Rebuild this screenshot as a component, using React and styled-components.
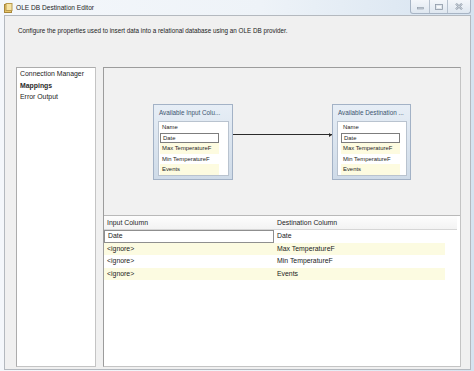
import React from "react";
import styled, { createGlobalStyle } from "styled-components";

const GlobalStyle = createGlobalStyle`
  html, body { margin: 0; padding: 0; }
  body {
    background: #e4ecf5;
    font-family: "Liberation Sans", Arial, sans-serif;
    color: #1b1b1b;
  }
`;

const inputRows = ["Date", "Max TemperatureF", "Min TemperatureF", "Events"];
const mappings = [
  { input: "Date", dest: "Date" },
  { input: "<ignore>", dest: "Max TemperatureF" },
  { input: "<ignore>", dest: "Min TemperatureF" },
  { input: "<ignore>", dest: "Events" },
];

function App() {
  return (
    <Window>
      <GlobalStyle />
      <TitleBar>
        <TitleIcon width="9" height="10" viewBox="0 0 9 10">
          <rect x="0.5" y="1.5" width="7" height="8" fill="#e8c66a" stroke="#a8873a" />
          <rect x="2" y="0.5" width="6" height="7" fill="#f6e3a4" stroke="#b99a4c" />
        </TitleIcon>
        <TitleText>OLE DB Destination Editor</TitleText>
        <CaptionButtons>
          <CaptionButton $w={18}>
            <svg width="7" height="6" viewBox="0 0 7 6">
              <rect x="0.5" y="3.5" width="6" height="1.5" fill="#c8d0da" stroke="#8d98a6" strokeWidth="0.6" />
            </svg>
          </CaptionButton>
          <CaptionButton $w={17}>
            <svg width="8" height="6" viewBox="0 0 8 6">
              <rect x="0.5" y="0.5" width="7" height="5" fill="#dfe5ec" stroke="#8d98a6" strokeWidth="0.8" />
              <rect x="2" y="2" width="4" height="2" fill="#f7f9fb" />
            </svg>
          </CaptionButton>
          <CaptionButton $w={22} $last>
            <svg width="8" height="7" viewBox="0 0 8 7">
              <path d="M1 0.8 L7 6.2 M7 0.8 L1 6.2" stroke="#8d98a6" strokeWidth="2.2" />
              <path d="M1 0.8 L7 6.2 M7 0.8 L1 6.2" stroke="#e9eef3" strokeWidth="0.8" />
            </svg>
          </CaptionButton>
        </CaptionButtons>
      </TitleBar>

      <Frame>
        <Client>
          <Header>
            Configure the properties used to insert data into a relational database using an OLE DB provider.
          </Header>
          <Body>
            <Nav>
              <NavItem>Connection Manager</NavItem>
              <NavItem $active>Mappings</NavItem>
              <NavItem>Error Output</NavItem>
            </Nav>
            <Panel>
              <Diagram>
                <TableNode $w={80}>
                  <NodeTitle>Available Input Colu...</NodeTitle>
                  <NodeList $offset={1}>
                    <NodeRow>Name</NodeRow>
                    {inputRows.map((r, i) => (
                      <NodeRow key={r} $boxed={i === 0} $yellow={i % 2 === 1}>
                        {r}
                      </NodeRow>
                    ))}
                  </NodeList>
                </TableNode>
                <Connector />
                <TableNode $w={79}>
                  <NodeTitle>Available Destination ...</NodeTitle>
                  <NodeList $offset={3}>
                    <NodeRow>Name</NodeRow>
                    {inputRows.map((r, i) => (
                      <NodeRow key={r} $boxed={i === 0} $yellow={i % 2 === 1}>
                        {r}
                      </NodeRow>
                    ))}
                  </NodeList>
                </TableNode>
              </Diagram>
              <Grid>
                <GridHeader>
                  <HeaderCell>Input Column</HeaderCell>
                  <HeaderCell>Destination Column</HeaderCell>
                </GridHeader>
                {mappings.map((m, i) => (
                  <GridRow key={i} $yellow={i % 2 === 1}>
                    <Cell $boxed={i === 0}>{m.input}</Cell>
                    <Cell>{m.dest}</Cell>
                  </GridRow>
                ))}
              </Grid>
            </Panel>
          </Body>
        </Client>
      </Frame>
    </Window>
  );
}

const Window = styled.div`
  width: 474px;
  height: 371px;
  display: flex;
  flex-direction: column;
  background: linear-gradient(to right, #f4f7fb 0%, #eef3f8 55%, #d6e3f0 100%);
  overflow: hidden;
`;

const TitleBar = styled.div`
  height: 15px;
  display: flex;
  align-items: center;
  padding-left: 4px;
`;

const TitleIcon = styled.svg`
  flex: none;
`;

const TitleText = styled.span`
  margin-left: 3px;
  font-size: 6.6px;
  color: #1e1e1e;
`;

const CaptionButtons = styled.div`
  margin-left: auto;
  margin-right: 3px;
  align-self: flex-start;
  display: flex;
  height: 13px;
  border: 1px solid #a7b4c4;
  border-top: none;
  border-radius: 0 0 3px 3px;
  background: linear-gradient(#f3f6fa, #dfe7f0);
  overflow: hidden;
`;

const CaptionButton = styled.div`
  width: ${(p) => p.$w}px;
  display: flex;
  align-items: center;
  justify-content: center;
  border-right: ${(p) => (p.$last ? "none" : "1px solid #b6c1ce")};
`;

const Frame = styled.div`
  flex: 1;
  display: flex;
  padding: 0 3px 1px 4px;
`;

const Client = styled.div`
  flex: 1;
  display: flex;
  flex-direction: column;
  background: #f0f0f0;
  border: 1px solid #b4b9bf;
`;

const Header = styled.div`
  height: 51px;
  box-sizing: border-box;
  padding: 10px 0 0 13px;
  font-size: 6.3px;
  line-height: 9px;
  white-space: nowrap;
`;

const Body = styled.div`
  flex: 1;
  display: flex;
  gap: 7px;
  padding: 0 9px 2px 11px;
`;

const Nav = styled.div`
  width: 80px;
  box-sizing: border-box;
  background: #fff;
  border: 1px solid #acacac;
  border-right-color: #c4c4c4;
  border-bottom-color: #c4c4c4;
  padding-top: 0;
`;

const NavItem = styled.div`
  padding-left: 3px;
  font-size: 6.9px;
  line-height: 11.7px;
  font-weight: ${(p) => (p.$active ? 700 : 400)};
  color: ${(p) => (p.$active ? "#2a2a2a" : "#1b1b1b")};
  white-space: nowrap;
`;

const Panel = styled.div`
  flex: 1;
  display: flex;
  flex-direction: column;
  background: #fff;
  border: 1px solid #9c9c9c;
  border-right-color: #c4c4c4;
  border-bottom-color: #c4c4c4;
`;

const Diagram = styled.div`
  height: 148px;
  box-sizing: border-box;
  background: #f1f1f1;
  border-bottom: 1px solid #b9b9b9;
  display: flex;
  align-items: flex-start;
  padding: 36px 0 0 49px;
`;

const TableNode = styled.div`
  width: ${(p) => p.$w}px;
  height: 76px;
  box-sizing: border-box;
  flex: none;
  display: flex;
  flex-direction: column;
  border: 1px solid #a3b2c6;
  background: linear-gradient(#e7eef6, #cfdbe8);
  padding: 0 3px 3px 4px;
`;

const NodeTitle = styled.div`
  height: 16px;
  line-height: 16px;
  padding-left: 1px;
  font-size: 6.3px;
  color: #3d5470;
  white-space: nowrap;
  overflow: hidden;
`;

const NodeList = styled.div`
  flex: 1;
  background: #fff;
  border: 1px solid #b9c3cf;
  padding-left: ${(p) => p.$offset}px;
`;

const NodeRow = styled.div`
  width: 59px;
  height: 10.5px;
  box-sizing: border-box;
  padding-left: 2px;
  font-size: 5.9px;
  line-height: ${(p) => (p.$boxed ? "8.5px" : "10.5px")};
  white-space: nowrap;
  color: #262626;
  background: ${(p) => (p.$yellow ? "#fdfbe0" : "#fff")};
  border: ${(p) => (p.$boxed ? "1px solid #7d7d7d" : "none")};
`;

const Connector = styled.div`
  width: 99px;
  height: 1px;
  flex: none;
  margin-top: 30px;
  background: #2b2b2b;
  position: relative;

  &::after {
    content: "";
    position: absolute;
    right: 0;
    top: -1.5px;
    border-left: 3px solid #2b2b2b;
    border-top: 2px solid transparent;
    border-bottom: 2px solid transparent;
  }
`;

const Grid = styled.div`
  flex: 1;
  background: #fff;
`;

const GridHeader = styled.div`
  height: 13px;
  width: 353px;
  display: grid;
  grid-template-columns: 169px 1fr;
  background: linear-gradient(#fdfdfd, #f3f3f3);
  border-bottom: 1px solid #d6d6d6;
`;

const HeaderCell = styled.div`
  padding-left: 3px;
  font-size: 6.9px;
  line-height: 13px;
  color: #1e1e1e;
  & + & {
    padding-left: 4px;
  }
`;

const GridRow = styled.div`
  width: 341px;
  height: 12.6px;
  display: grid;
  grid-template-columns: 170px 171px;
  background: ${(p) => (p.$yellow ? "#fcfbe1" : "#fff")};
`;

const Cell = styled.div`
  box-sizing: border-box;
  padding-left: 3px;
  font-size: 6.9px;
  line-height: ${(p) => (p.$boxed ? "10.6px" : "12.6px")};
  white-space: nowrap;
  color: #222;
  border: ${(p) => (p.$boxed ? "1px solid #8f8f8f" : "none")};
`;

export default App;
